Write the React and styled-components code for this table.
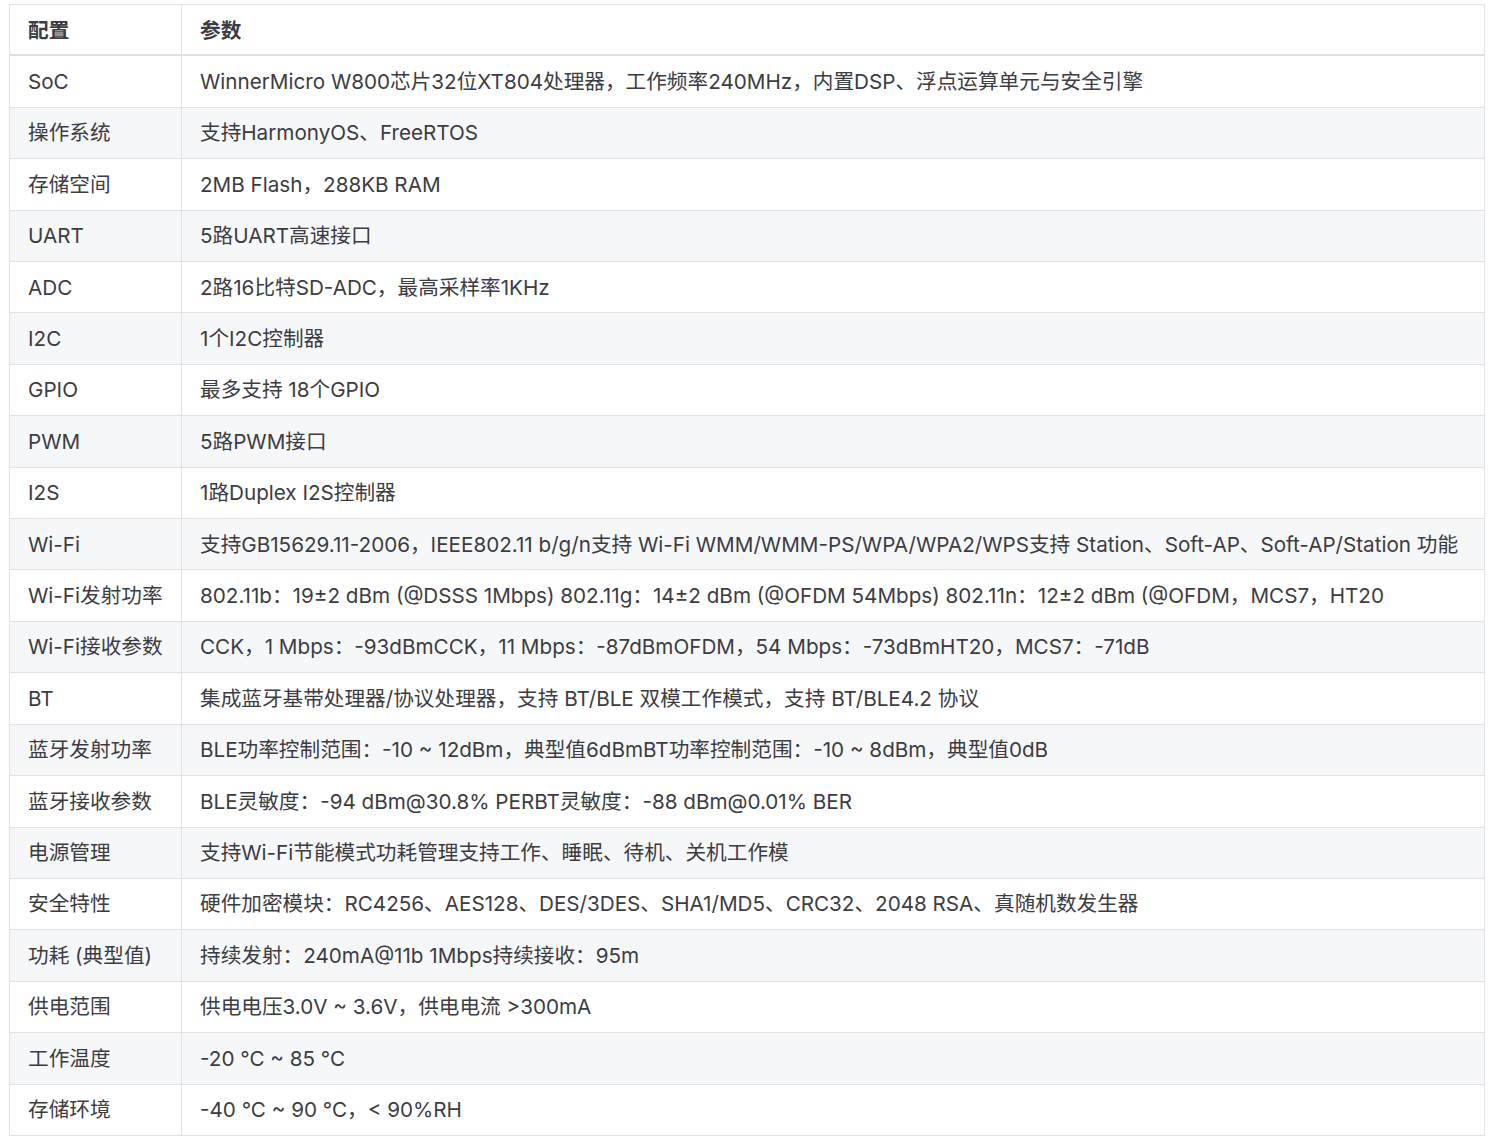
import React from "react";
import styled, { createGlobalStyle } from "styled-components";

const rows = [
  ["SoC", "WinnerMicro W800芯片32位XT804处理器，工作频率240MHz，内置DSP、浮点运算单元与安全引擎"],
  ["操作系统", "支持HarmonyOS、FreeRTOS"],
  ["存储空间", "2MB Flash，288KB RAM"],
  ["UART", "5路UART高速接口"],
  ["ADC", "2路16比特SD-ADC，最高采样率1KHz"],
  ["I2C", "1个I2C控制器"],
  ["GPIO", "最多支持 18个GPIO"],
  ["PWM", "5路PWM接口"],
  ["I2S", "1路Duplex I2S控制器"],
  ["Wi-Fi", "支持GB15629.11-2006，IEEE802.11 b/g/n支持 Wi-Fi WMM/WMM-PS/WPA/WPA2/WPS支持 Station、Soft-AP、Soft-AP/Station 功能"],
  ["Wi-Fi发射功率", "802.11b：19±2 dBm (@DSSS 1Mbps) 802.11g：14±2 dBm (@OFDM 54Mbps) 802.11n：12±2 dBm (@OFDM，MCS7，HT20"],
  ["Wi-Fi接收参数", "CCK，1 Mbps：-93dBmCCK，11 Mbps：-87dBmOFDM，54 Mbps：-73dBmHT20，MCS7：-71dB"],
  ["BT", "集成蓝牙基带处理器/协议处理器，支持 BT/BLE 双模工作模式，支持 BT/BLE4.2 协议"],
  ["蓝牙发射功率", "BLE功率控制范围：-10 ~ 12dBm，典型值6dBmBT功率控制范围：-10 ~ 8dBm，典型值0dB"],
  ["蓝牙接收参数", "BLE灵敏度：-94 dBm@30.8% PERBT灵敏度：-88 dBm@0.01% BER"],
  ["电源管理", "支持Wi-Fi节能模式功耗管理支持工作、睡眠、待机、关机工作模"],
  ["安全特性", "硬件加密模块：RC4256、AES128、DES/3DES、SHA1/MD5、CRC32、2048 RSA、真随机数发生器"],
  ["功耗 (典型值)", "持续发射：240mA@11b 1Mbps持续接收：95m"],
  ["供电范围", "供电电压3.0V ~ 3.6V，供电电流 >300mA"],
  ["工作温度", "-20 °C ~ 85 °C"],
  ["存储环境", "-40 °C ~ 90 °C，< 90%RH"],
];

const GlobalStyle = createGlobalStyle`
  body {
    margin: 0;
    background: #ffffff;
    font-family: Inter, "Noto Sans CJK SC", sans-serif;
    color: #3c3c43;
  }
`;

const Page = styled.div`
  padding: 4px 11px 0 9px;
`;

const Table = styled.table`
  width: 100%;
  border-collapse: collapse;
  font-size: 20.65px;
  line-height: 27.4px;
`;

const HeadCell = styled.th`
  text-align: left;
  font-weight: 600;
  padding: 12px 18px 10px;
  border: 1px solid #e2e2e5;
  border-bottom: 2px solid #e0e0e4;
  width: ${(p) => (p.$first ? "172px" : "auto")};
  box-sizing: border-box;
  white-space: nowrap;
`;

const Row = styled.tr`
  background: ${(p) => (p.$striped ? "#f6f7f9" : "#ffffff")};
`;

const Cell = styled.td`
  padding: 11.5px 18px;
  border: 1px solid #e2e2e5;
  white-space: nowrap;
`;

export default function App() {
  return (
    <>
      <GlobalStyle />
      <Page>
        <Table>
          <thead>
            <tr>
              <HeadCell $first>配置</HeadCell>
              <HeadCell>参数</HeadCell>
            </tr>
          </thead>
          <tbody>
            {rows.map(([k, v], i) => (
              <Row key={k} $striped={i % 2 === 1}>
                <Cell>{k}</Cell>
                <Cell>{v}</Cell>
              </Row>
            ))}
          </tbody>
        </Table>
      </Page>
    </>
  );
}
